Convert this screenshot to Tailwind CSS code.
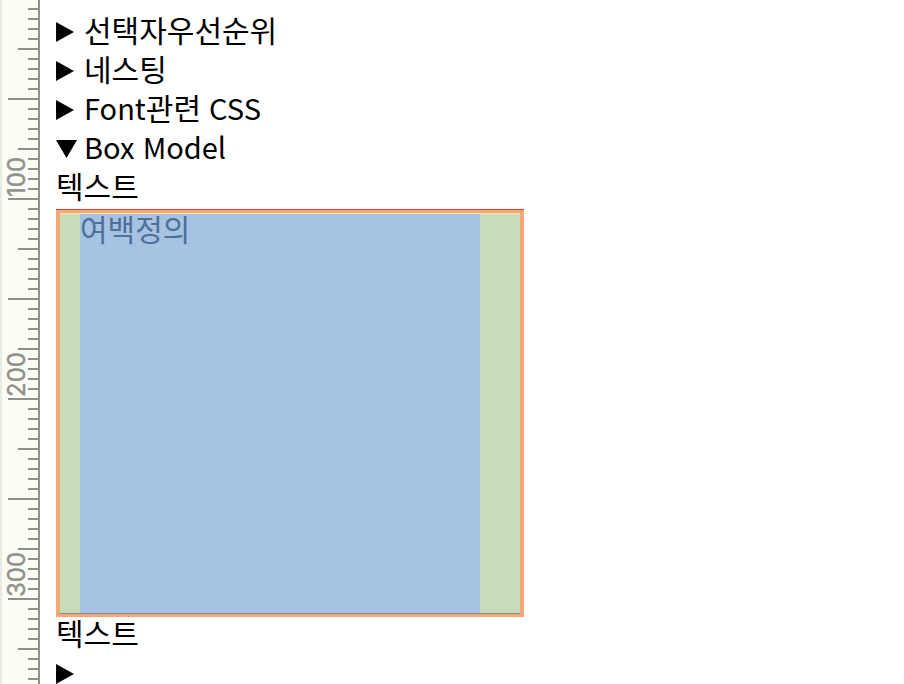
<!DOCTYPE html>
<html lang="ko">
<head>
<meta charset="utf-8">
<title>Box Model</title>
<script src="https://cdn.jsdelivr.net/npm/@tailwindcss/browser@4"></script>
</head>
<body class="flex h-screen overflow-hidden bg-white text-black">
<aside class="w-10 shrink-0" aria-label="ruler">
<svg class="block h-full w-10" aria-hidden="true">
<defs>
<pattern id="ticks" width="40" height="100" y="-2" patternUnits="userSpaceOnUse">
<path d="M8 1H38M28 11H38M28 21H38M28 31H38M28 41H38M18 51H38M28 61H38M28 71H38M28 81H38M28 91H38" stroke="#91918b" stroke-width="2"/>
</pattern>
</defs>
<rect width="40" height="100%" fill="#fbfdf4"/>
<rect width="2" height="100%" fill="#e6ece2"/>
<rect width="40" height="100%" fill="url(#ticks)"/>
<rect x="38" width="2" height="100%" fill="#91918b"/>
<g fill="#91918b" stroke="#91918b" stroke-width="0.4" font-family="Inter, sans-serif" font-size="24">
<text transform="translate(25 197) rotate(-90)">100</text>
<text transform="translate(25 397) rotate(-90)">200</text>
<text transform="translate(25 597) rotate(-90)">300</text>
</g>
</svg>
</aside>
<main class="min-w-0 flex-1 px-4 pt-3 font-['Noto_Sans_CJK_KR',sans-serif] text-[30px] leading-[35px]">
<details>
<summary class="flex items-center gap-2.5 pb-1"><svg class="mt-1 h-5 w-[18px]" viewBox="0 0 18 20"><path d="M0 0L18 10L0 20Z"/></svg>선택자우선순위</summary>
</details>
<details>
<summary class="flex items-center gap-2.5 pb-1"><svg class="mt-1 h-5 w-[18px]" viewBox="0 0 18 20"><path d="M0 0L18 10L0 20Z"/></svg>네스팅</summary>
</details>
<details>
<summary class="flex items-center gap-2.5 pb-1"><svg class="mt-1 h-5 w-[18px]" viewBox="0 0 18 20"><path d="M0 0L18 10L0 20Z"/></svg><span><span class="text-[29px]">Font</span>관련<span class="text-[29px]"> CSS</span></span></summary>
</details>
<details open>
<summary class="flex items-center gap-[7px] pb-1"><svg class="mt-1 h-[18px] w-[21px]" viewBox="0 0 21 18"><path d="M0 0H21L10.500 18Z"/></svg><span class="text-[29px]">Box Model</span></summary>
<p class="pb-1">텍스트</p>
<div class="mt-0.5 w-fit border-t border-[#e8392b]">
<div class="border-x-4 border-y-3 border-[#f5a876]">
<div class="border-t border-b border-t-[#f9e4b4] border-b-[#8f8686] bg-[#c9dcba] pr-10 pl-5">
<div class="h-[399px] w-[400px] bg-[#a6c3e4] text-[#507098] leading-[29px]">여백정의</div>
</div>
</div>
</div>
<p class="pb-1.5 leading-[31px]">텍스트</p>
</details>
<details>
<summary class="flex h-[39px] items-center" aria-label="details"><svg class="h-5 w-[18px]" viewBox="0 0 18 20"><path d="M0 0L18 10L0 20Z"/></svg></summary>
</details>
</main>
</body>
</html>
